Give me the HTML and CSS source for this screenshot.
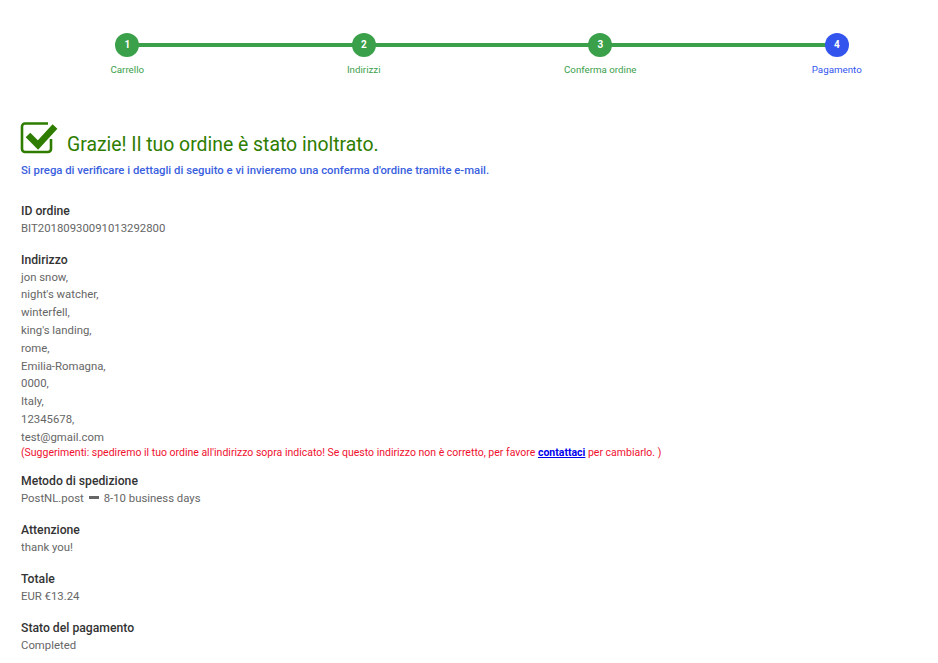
FILE: index.html
```html
<!DOCTYPE html>
<html lang="it">
<head>
<meta charset="utf-8">
<title>Grazie</title>
<link rel="stylesheet" href="styles.css">
</head>
<body>
<ol class="steps">
  <li class="step"><span class="dot">1</span><span class="label">Carrello</span></li>
  <li class="step"><span class="dot">2</span><span class="label">Indirizzi</span></li>
  <li class="step"><span class="dot">3</span><span class="label">Conferma ordine</span></li>
  <li class="step current"><span class="dot">4</span><span class="label">Pagamento</span></li>
</ol>
<main class="content">
  <h1 class="title">
    <svg class="check" width="38" height="32" viewBox="0 0 38 32" aria-hidden="true">
      <path d="M28 1.500H5A3 3 0 0 0 2 4.500V27A3 3 0 0 0 5 30H28A3 3 0 0 0 31 27V17" fill="none" stroke="#2e7d00" stroke-width="2.600"/>
      <path d="M8 13L18 23L35 4.500" fill="none" stroke="#2e7d00" stroke-width="6.500"/>
    </svg>
    <span>Grazie! Il tuo ordine è stato inoltrato.</span>
  </h1>
  <p class="notice">Si prega di verificare i dettagli di seguito e vi invieremo una conferma d'ordine tramite e-mail.</p>
  <section class="field"><h2>ID ordine</h2><p>BIT20180930091013292800</p></section>
  <section class="field address">
    <h2>Indirizzo</h2>
    <p>jon snow,</p><p>night's watcher,</p><p>winterfell,</p><p>king's landing,</p><p>rome,</p><p>Emilia-Romagna,</p><p>0000,</p><p>Italy,</p><p>12345678,</p><p>test@gmail.com</p>
    <p class="tip">(Suggerimenti: spediremo il tuo ordine all'indirizzo sopra indicato! Se questo indirizzo non è corretto, per favore <a href="#">contattaci</a> per cambiarlo. )</p>
  </section>
  <section class="field"><h2>Metodo di spedizione</h2><p>PostNL.post<span class="dash"></span>8-10 business days</p></section>
  <section class="field"><h2>Attenzione</h2><p>thank you!</p></section>
  <section class="field"><h2>Totale</h2><p>EUR €13.24</p></section>
  <section class="field"><h2>Stato del pagamento</h2><p>Completed</p></section>
</main>
</body>
</html>
```
FILE: styles.css
```css
html, body { margin: 0; padding: 0; }
body {
  width: 938px;
  height: 663px;
  overflow: hidden;
  background: #fff;
  font-family: Roboto, "Liberation Sans", sans-serif;
  color: #666;
}
.steps {
  list-style: none;
  margin: 0;
  padding: 33px 0 0;
  display: grid;
  grid-template-columns: repeat(4, 236.500px);
  margin-left: 9px;
}
.step {
  position: relative;
  display: flex;
  flex-direction: column;
  align-items: center;
  color: #3aa04a;
}
.step + .step::before {
  content: "";
  position: absolute;
  left: -50%;
  right: 50%;
  top: 10px;
  height: 4px;
  background: #3aa04a;
}
.dot {
  position: relative;
  z-index: 1;
  width: 24px;
  height: 24px;
  border-radius: 50%;
  background: #3aa04a;
  color: #fff;
  font-size: 10px;
  font-weight: 700;
  line-height: 24px;
  text-align: center;
}
.label { margin-top: 7px; font-size: 9.750px; line-height: 12px; white-space: nowrap; }
.current { color: #3355ee; }
.current .dot { background: #3355ee; }
.content { padding: 46px 21px 0; }
.title {
  display: flex;
  align-items: flex-end;
  gap: 9px;
  margin: 0;
  font-size: 19.400px;
  font-weight: 400;
  line-height: 24px;
  color: #2e7d00;
}
.check { display: block; margin: 0 0 3px -1px; }
.notice {
  margin: 5px 0 0;
  font-size: 11.330px;
  font-weight: 500;
  line-height: 16px;
  color: #3a5fe0;
}
.field { margin-top: 13.200px; }
.notice + .field { margin-top: 23.600px; }
.field h2 {
  margin: 0;
  font-size: 12.200px;
  font-weight: 500;
  line-height: 18px;
  color: #333;
}
.field p { margin: 0; font-size: 11.350px; line-height: 17.800px; }
.field .tip { font-size: 10.500px; line-height: 12px; margin-bottom: 3.800px; color: #f01030; }
.tip a { color: #0000ee; font-weight: 700; text-decoration: underline; }
.dash {
  display: inline-block;
  width: 10px;
  height: 3px;
  margin: 0 5px;
  vertical-align: 3px;
  background: #666;
}
```
